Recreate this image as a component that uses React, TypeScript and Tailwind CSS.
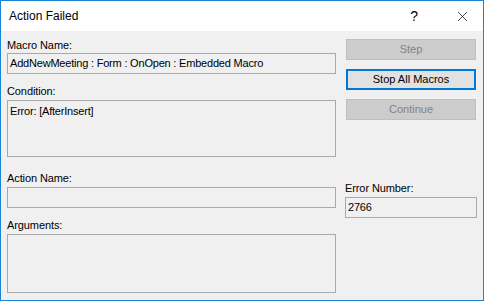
import { X } from "lucide-react";

const font = { fontFamily: '"Liberation Sans", Arial, sans-serif' };

function Field({ value, className = "" }: { value?: string; className?: string }) {
  return (
    <div
      className={`h-[21px] border border-[#a9a9a9] bg-[#f0f0f0] pl-[2px] flex items-center text-[11px] tracking-[-0.2px] text-black leading-none ${className}`}
    >
      {value}
    </div>
  );
}

function Area({ value, className = "" }: { value?: string; className?: string }) {
  return (
    <div
      className={`border border-[#a9a9a9] bg-[#f0f0f0] px-[2px] pt-[3px] text-[11px] tracking-[-0.2px] text-black leading-[14px] ${className}`}
    >
      {value}
    </div>
  );
}

function Label({ children, className = "" }: { children: string; className?: string }) {
  return (
    <div className={`h-[14px] text-[11px] tracking-[-0.1px] leading-[14px] text-black ${className}`}>
      {children}
    </div>
  );
}

function DialogButton({ label, primary }: { label: string; primary?: boolean }) {
  return (
    <button
      type="button"
      className={`h-[21px] w-full flex items-center justify-center text-[11px] leading-none ${
        primary
          ? "border-2 border-[#0078d7] bg-[#e1e1e1] text-black"
          : "border border-[#bfbfbf] bg-[#cccccc] text-[#838383]"
      }`}
    >
      {label}
    </button>
  );
}

export default function App() {
  return (
    <div
      className="w-[484px] h-[301px] border border-[#1883d7] bg-[#f0f0f0] flex flex-col overflow-hidden"
      style={font}
    >
      {/* Title bar */}
      <div className="h-[30px] shrink-0 bg-white flex items-center pl-[8px]">
        <span className="text-[12px] text-black">Action Failed</span>
        <span className="ml-auto mr-[36px] text-[14px] text-black">?</span>
        <X size={17} strokeWidth={1} className="mr-[12px] text-black" />
      </div>

      {/* Body */}
      <div className="flex pl-[6px] pt-[7px] gap-[9px]">
        <div className="w-[329px] flex flex-col">
          <Label>Macro Name:</Label>
          <Field value="AddNewMeeting : Form : OnOpen : Embedded Macro" className="mt-[1px]" />
          <Label className="mt-[10px]">Condition:</Label>
          <Area value="Error: [AfterInsert]" className="mt-[2px] h-[57px]" />
          <Label className="mt-[14px]">Action Name:</Label>
          <Field className="mt-[2px]" />
          <Label className="mt-[10px]">Arguments:</Label>
          <Area className="mt-[2px] h-[59px]" />
        </div>

        <div className="w-[132px] flex flex-col">
          <div className="flex flex-col gap-[9px] px-[1px] pt-[1px]">
            <DialogButton label="Step" />
            <DialogButton label="Stop All Macros" primary />
            <DialogButton label="Continue" />
          </div>
          <Label className="mt-[61px]">Error Number:</Label>
          <Field value="2766" className="mt-[2px]" />
        </div>
      </div>
    </div>
  );
}
